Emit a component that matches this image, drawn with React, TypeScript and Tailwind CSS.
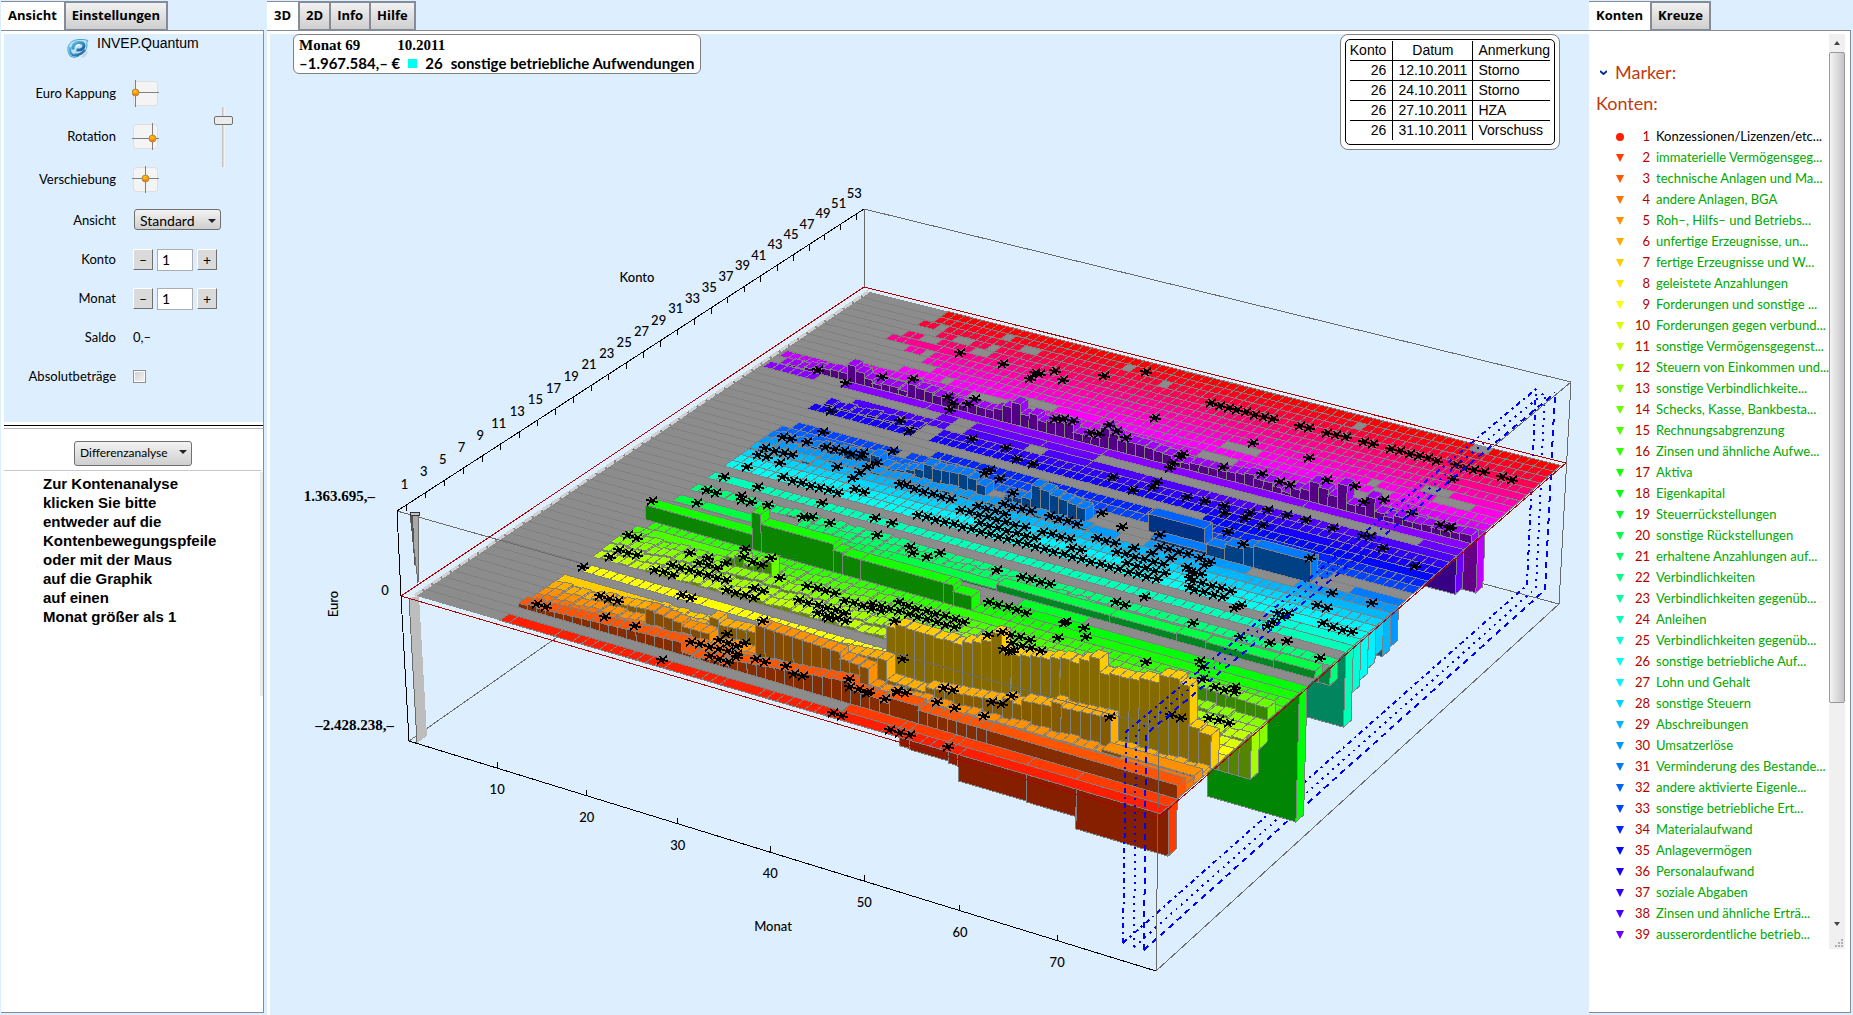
import { useState } from 'react'
import type { ReactNode } from 'react'

type Point = [number, number]

/* ---------- account list ---------- */

const ACCOUNTS = [
  'Konzessionen/Lizenzen/etc...',
  'immaterielle Vermögensgeg...',
  'technische Anlagen und Ma...',
  'andere Anlagen, BGA',
  'Roh–, Hilfs– und Betriebs...',
  'unfertige Erzeugnisse, un...',
  'fertige Erzeugnisse und W...',
  'geleistete Anzahlungen',
  'Forderungen und sonstige ...',
  'Forderungen gegen verbund...',
  'sonstige Vermögensgegenst...',
  'Steuern von Einkommen und...',
  'sonstige Verbindlichkeite...',
  'Schecks, Kasse, Bankbesta...',
  'Rechnungsabgrenzung',
  'Zinsen und ähnliche Aufwe...',
  'Aktiva',
  'Eigenkapital',
  'Steuerrückstellungen',
  'sonstige Rückstellungen',
  'erhaltene Anzahlungen auf...',
  'Verbindlichkeiten',
  'Verbindlichkeiten gegenüb...',
  'Anleihen',
  'Verbindlichkeiten gegenüb...',
  'sonstige betriebliche Auf...',
  'Lohn und Gehalt',
  'sonstige Steuern',
  'Abschreibungen',
  'Umsatzerlöse',
  'Verminderung des Bestande...',
  'andere aktivierte Eigenle...',
  'sonstige betriebliche Ert...',
  'Materialaufwand',
  'Anlagevermögen',
  'Personalaufwand',
  'soziale Abgaben',
  'Zinsen und ähnliche Erträ...',
  'ausserordentliche betrieb...',
]

const NOTES = [
  { konto: 26, datum: '12.10.2011', text: 'Storno' },
  { konto: 26, datum: '24.10.2011', text: 'Storno' },
  { konto: 26, datum: '27.10.2011', text: 'HZA' },
  { konto: 26, datum: '31.10.2011', text: 'Vorschuss' },
]

const accountColor = (k: number, light = 50) => `hsl(${Math.round((k * 360) / 53)} 100% ${light}%)`

/* ---------- projection ---------- */

const MONTHS = 80
const KONTEN = 54

// maps the unit square onto the quad left, front, right, back
function quadMap(p0: Point, p1: Point, p2: Point, p3: Point) {
  const dx1 = p1[0] - p2[0]
  const dx2 = p3[0] - p2[0]
  const sx = p0[0] - p1[0] + p2[0] - p3[0]
  const dy1 = p1[1] - p2[1]
  const dy2 = p3[1] - p2[1]
  const sy = p0[1] - p1[1] + p2[1] - p3[1]
  const den = dx1 * dy2 - dx2 * dy1
  const g = (sx * dy2 - dx2 * sy) / den
  const h = (dx1 * sy - sx * dy1) / den
  const a = p1[0] - p0[0] + g * p1[0]
  const b = p3[0] - p0[0] + h * p3[0]
  const d = p1[1] - p0[1] + g * p1[1]
  const e = p3[1] - p0[1] + h * p3[1]
  return (u: number, v: number): Point => {
    const w = 1 + g * u + h * v
    return [(a * u + b * v + p0[0]) / w, (d * u + e * v + p0[1]) / w]
  }
}

const zeroPlane = quadMap([401, 596], [1158, 818], [1566, 463], [864, 287])
const topPlane = quadMap([397, 511], [1159, 728], [1571, 382], [864, 209])
const bottomPlane = quadMap([409, 741], [1156, 971], [1559, 604], [868, 419])

function project(m: number, k: number, h = 0): Point {
  const u = m / MONTHS
  const v = k / KONTEN
  const p = zeroPlane(u, v)
  if (h === 0) return p
  const q = h > 0 ? topPlane(u, v) : bottomPlane(u, v)
  const t = h > 0 ? h / 85 : -h / 150
  return [p[0] + (q[0] - p[0]) * t, p[1] + (q[1] - p[1]) * t]
}

const pts = (list: Point[]) => list.map(([x, y]) => `${x.toFixed(1)},${y.toFixed(1)}`).join(' ')

/* ---------- balances ---------- */

// from month, to month, height at start, height at end, drawn as one block
type Seg = [number, number, number?, number?, boolean?]

const flat = (...ranges: [number, number][]): Seg[] => ranges.map(([a, b]) => [a, b, 0, 0])
const block = (a: number, b: number, h = 0): Seg => [a, b, h, h, true]
const bars = (from: number, heights: number[]): Seg[] => heights.map((h, i) => [from + i, from + i, h, h])

const ROWS: Record<number, Seg[]> = {
  1: [[11, 11], block(12, 16), block(17, 18), [19, 28], block(29, 31), [32, 34], block(35, 38), [39, 46], block(47, 51), [52, 58], [59, 59], block(60, 79)],
  2: [block(47, 52, -4), block(53, 53, -18), block(54, 57, -19), block(58, 58, -21), block(59, 65, -36), block(66, 70, -37), block(71, 79, -49)],
  3: [[11, 28, 4, 12], [29, 33, 2, 3], [34, 46, 9, 21], [47, 49, 14, 13], [50, 50, 11, 11], block(51, 53, 17), [54, 60, 13, 13], block(61, 79, 13)],
  4: [[11, 16, 1, 2], [17, 30, 2, 3], [31, 47, 3, 4], [48, 50, 4, 4], block(51, 53, 7), [54, 58, 4, 4], block(59, 62, 5), [63, 72, 5, 5], block(73, 79, 7)],
  5: [[11, 22, 1, 2], [23, 26, 17, 13], [27, 29, 10, 10], [30, 34, 2, 3], [35, 43, 32, 29], [44, 46, 23, 21], [47, 60, 3, 3], [61, 70, 4, 4], block(71, 79, 8)],
  6: [[11, 15, 1, 1], [16, 22, 3, 8], [23, 28, 3, 4], [29, 29, 18, 18], [30, 34, 13, 16], [35, 42, 19, 21], [43, 47, 22, 25], [48, 51, 6, 5], [52, 59, 10, 17], [60, 61, 21, 19], [62, 64, 24, 26], [65, 65, 31, 31], [66, 70, 28, 31], [71, 79, 3, 3]],
  7: [block(11, 20, 1), [21, 46, 1, 2], ...bars(47, [50, 54, 53, 53, 53, 52, 53, 52, 56, 59, 63, 73, 56, 57, 59, 61, 62, 65, 67, 66, 71, 76, 63, 65, 65, 66, 69, 69, 77, 78, 74, 36, 33])],
  8: flat([47, 60], [61, 79]),
  9: [[12, 24], block(25, 27), [28, 46], [47, 79]],
  10: flat([62, 79]),
  11: [[11, 30, 0, 3], [31, 47, 3, 1], [48, 79, 1, 1]],
  12: [[11, 28, 1, 3], [29, 46, 2, 5], [47, 71, 1, 2], [72, 79, -45, -45]],
  13: [[11, 24, 2, 4], [25, 40, 5, 3], [41, 70, 2, 3], [71, 76, 2, 2], [77, 79, -22, -22]],
  14: [[11, 22, 1, 2], [23, 24, 12, 15], [25, 26, 9, 14], [27, 27, 19, 19], [28, 50, 1, 1], [51, 72, 1, 2], [73, 79, 14, 12]],
  15: [[11, 12], block(13, 23, 1), [24, 40, 1, 1], [41, 79]],
  16: [[12, 44], block(45, 50), [51, 79]],
  17: [block(11, 22, 15), block(23, 23, 38), block(24, 31, 28), block(32, 32, 22), block(33, 34, 20), block(35, 43, 20), block(44, 44, 20), block(45, 46, 14), [47, 54], block(55, 79)],
  18: [[47, 51], block(52, 55), block(56, 70), block(71, 79, -130)],
  19: [block(50, 56)],
  20: [block(11, 13, 1), block(14, 23, 1), [24, 34, 1, 1], block(35, 46, 2), block(47, 58, 7), block(59, 65, 7), block(66, 68, 8), block(69, 75, 7), block(76, 79, 8)],
  21: [[24, 46, 1, 1], [47, 55, 1, 1]],
  22: [[11, 34, 0, 1], [35, 70], [71, 79, -20, -20]],
  24: [[11, 12], block(13, 15), [16, 72], block(73, 79, -76)],
  25: [block(71, 73), block(74, 79, -48)],
  26: [[11, 30], [31, 70], block(71, 79, -42)],
  27: [[11, 74], [75, 79, -37, -37]],
  28: [[11, 22], block(23, 25), [26, 58], block(59, 62), [63, 75], [76, 79, -30, -30]],
  29: [[11, 18, 1, 1], block(19, 21), [22, 60], block(61, 65), [66, 71], block(72, 79, -38)],
  30: [[11, 30, 1, 1], [31, 47, 1, 1], block(48, 50), [54, 60], block(61, 64), [70, 79, -35, -35]],
  31: [[11, 15, 1, 2], [16, 22, 3, 8], [23, 23, 11, 11], [24, 26, 2, 3], [27, 28, 6, 9], [29, 29, 16, 16], [30, 33, 14, 16], [34, 34, 14, 14], [35, 35, 10, 10], [38, 40, 5, 9], [41, 42, 24, 22], [43, 46, 19, 14], block(54, 59, 3), block(60, 61, 11), block(62, 63, 16), block(64, 64, 20), block(65, 70, 22), block(75, 79)],
  32: [[11, 14], block(15, 19), [20, 46], block(53, 58, 18), [59, 71]],
  33: flat([12, 23], [25, 60], [61, 79]),
  34: [[27, 60], block(61, 70), [71, 79]],
  35: [[56, 72], block(73, 79)],
  36: [[11, 22], [25, 62], block(63, 68), [69, 79]],
  37: [[12, 14, 1, 1], [15, 22, 1, 1], [25, 79]],
  38: [block(14, 18), [19, 24], block(27, 33), block(36, 40), block(41, 46), block(47, 52), [53, 68], block(69, 79)],
  39: [block(23, 24), block(27, 34), block(35, 40), block(76, 79, -40)],
  40: [[2, 7], block(11, 20), block(21, 40), block(41, 62), block(63, 79)],
  41: [
    [3, 4, 1, 1],
    ...bars(5, [2, 3, 5, 7, 8, 8, 18, 13, 8, 4, 7, 7, 4, 14, 12, 11, 9, 9, 6, 6, 9, 9, 9, 12, 17, 23, 13, 16, 11, 13, 15, 16, 8, 8, 9, 21, 17, 12, 13, 13, 12, 11, 10, 5, 6, 8, 8, 8, 8, 9, 10, 12, 9, 9, 6, 4, 9, 11, 21, 17, 12, 26, 8, 9, 20, 7, 5, 8, 6, 6, 7, 6, 6, 7, 8]),
  ],
  42: [[2, 8], block(9, 10), [11, 72], block(73, 79, -58)],
  43: flat([10, 22], [31, 48], [53, 64], [68, 79]),
  44: [[14, 18], [20, 27], block(32, 36), [37, 66], [69, 79]],
  45: [[17, 49], [54, 65], [67, 72], block(77, 79)],
  46: [[15, 17], [18, 70], block(74, 79)],
  47: flat([12, 13], [15, 79]),
  48: [[9, 10], block(11, 14), block(15, 18), [19, 70], block(71, 79)],
  49: flat([10, 11], [14, 17], [20, 79]),
  50: [[13, 14], [17, 18], [20, 68], block(69, 79)],
  51: flat([10, 11], [13, 21], [24, 37], [39, 79]),
  52: flat([11, 18], [20, 32], [34, 58], [60, 79]),
  53: flat([11, 70], [73, 79]),
}

/* ---------- booking crosses ---------- */

// konto, from month, to month, step
const CROSS_RUNS: [number, number, number, number?][] = [
  [50, 44, 51], [50, 54, 55], [50, 57, 59], [50, 61, 62], [50, 64, 69], [50, 71, 74], [50, 76, 77],
  [41, 34, 36], [41, 38, 40], [41, 41, 42], [41, 76, 77], [31, 17, 21], [31, 12, 13],
  [29, 29, 33], [28, 35, 42], [29, 36, 39], [30, 38, 41], [27, 38, 44], [28, 44, 47], [30, 43, 46], [29, 49, 51],
  [28, 52, 57], [27, 54, 58], [26, 18, 23], [26, 32, 58], [27, 24, 25], [27, 48, 49], [28, 60, 61], [26, 62, 65],
  [27, 61, 65], [29, 53, 58, 2], [30, 55, 58],
  [22, 12, 13], [22, 16, 17], [28, 12, 13], [29, 13, 15],
  [14, 11, 12], [14, 18, 22, 2], [14, 24, 28], [12, 12, 14], [12, 18, 24], [11, 12, 12], [11, 17, 19],
  [11, 25, 28], [12, 27, 28], [13, 20, 22], [12, 32, 37], [13, 36, 40], [14, 31, 34], [14, 38, 47], [15, 40, 47], [11, 35, 38],
  [15, 51, 54], [14, 53, 56], [18, 47, 51], [22, 47, 50], [22, 57, 58], [13, 53, 54], [11, 72, 73],
  [12, 75, 77], [14, 74, 76], [6, 16, 18], [3, 12, 13], [4, 28, 33], [3, 31, 34], [4, 35, 36], [5, 30, 32],
  [3, 40, 41], [1, 46, 47], [1, 52, 54], [1, 58, 58], [4, 45, 47], [5, 49, 50], [6, 53, 54], [6, 58, 60], [6, 70, 70],
  [9, 11, 11], [9, 22, 23], [9, 46, 46],
]

// single crosses as canvas positions
const CROSSES: Point[] = [
  [960, 353], [1003, 364], [1035, 373], [1030, 379], [1040, 374], [1055, 371], [1063, 380], [1104, 376], [1146, 372],
  [1155, 418], [818, 370], [846, 383], [882, 377], [913, 379], [948, 397], [953, 403], [950, 410], [975, 399], [968, 404],
  [831, 411], [900, 421], [909, 431], [823, 432], [893, 451], [972, 439], [1006, 448], [1017, 459], [1033, 464],
  [990, 470], [985, 473], [1000, 479], [1113, 477], [1157, 482], [1153, 487], [1133, 490], [1187, 497], [807, 442],
  [837, 467], [765, 448], [747, 467], [780, 463], [783, 477], [853, 478], [860, 473], [868, 467], [877, 463], [863, 453],
  [900, 484], [906, 485], [1013, 493], [1102, 513], [1122, 527], [822, 503], [875, 518], [892, 523], [877, 535],
  [910, 547], [913, 553], [927, 557], [940, 553], [997, 570], [758, 487], [768, 505], [803, 517], [812, 517], [830, 523],
  [1253, 443], [1309, 458], [1453, 479], [1180, 457], [1173, 463], [1170, 468], [1183, 454], [1223, 467], [1262, 474],
  [1280, 482], [1290, 485], [1327, 480], [1355, 486], [1364, 502], [1384, 500], [1412, 513], [1451, 527],
  [1205, 501], [1224, 506], [1268, 510], [1287, 515], [1306, 520], [1250, 513], [1245, 518], [1225, 513], [1263, 525],
  [1228, 532], [1333, 528], [1363, 535], [1370, 537], [1383, 548], [1415, 566], [1243, 544], [1310, 558], [1332, 593],
  [1372, 603], [1317, 605], [1327, 608], [1323, 623], [1333, 627], [1343, 630], [1352, 632], [1193, 623], [1270, 643],
  [1287, 641], [1240, 637], [1278, 613], [1283, 617], [1273, 622], [1268, 626], [1288, 614], [1241, 605], [1235, 608],
  [1195, 573], [1190, 578], [1205, 565], [1200, 558], [1210, 562], [1187, 567], [1190, 587], [1160, 535],
  [652, 501], [697, 503], [741, 496], [724, 477], [745, 549], [1066, 622], [1084, 628], [1086, 637], [1064, 623],
  [1058, 638], [1200, 661], [1203, 667], [1203, 679], [1235, 687], [1146, 662], [1320, 658], [1145, 597],
  [829, 618], [662, 660], [786, 666], [763, 621], [1010, 651], [988, 635], [895, 621], [605, 617], [635, 626],
  [1110, 717], [984, 716], [937, 702], [955, 708], [745, 643], [727, 634], [849, 679], [867, 693],
  [885, 699], [898, 692],
]

const cell = (m: number): [number, number] => [m - 0.4, m === 79 ? 79.8 : m + 0.6]

function Bar({ k, from, to, h }: { k: number; from: number; to: number; h: number }) {
  const a = cell(from)[0]
  const b = cell(to)[1]
  const near = k - 0.5
  const far = k + 0.5
  const top = Math.max(h, 0)
  return (
    <g stroke="#808080">
      {h > 0 && (
        <>
          <polygon points={pts([project(a, near), project(b, near), project(b, near, h), project(a, near, h)])} fill={accountColor(k, 26)} />
          <polygon points={pts([project(b, near), project(b, far), project(b, far, h), project(b, near, h)])} fill={accountColor(k)} />
        </>
      )}
      <polygon points={pts([project(a, near, top), project(b, near, top), project(b, far, top), project(a, far, top)])} fill={accountColor(k)} />
    </g>
  )
}

function HangingBar({ k, from, to, h }: { k: number; from: number; to: number; h: number }) {
  const a = cell(from)[0]
  const b = cell(to)[1]
  return (
    <g stroke="#808080">
      <polygon points={pts([project(a, k - 0.5), project(b, k - 0.5), project(b, k - 0.5, h), project(a, k - 0.5, h)])} fill={accountColor(k, 26)} />
      <polygon points={pts([project(b, k - 0.5), project(b, k + 0.5), project(b, k + 0.5, h), project(b, k - 0.5, h)])} fill={accountColor(k)} />
    </g>
  )
}

function buildSurface() {
  const below: ReactNode[] = []
  const above: ReactNode[] = []
  for (let k = 53; k >= 1; k--) {
    for (const [from, to, h0 = 0, h1 = h0, solid] of ROWS[k] ?? []) {
      const step = solid ? to - from + 1 : 1
      for (let m = from; m <= to; m += step) {
        const t = to > from ? (m - from) / (to - from) : 0
        const end = m + step - 1
        let h = h0 + (h1 - h0) * t
        // small ripple on the low rows
        if (!solid && h > 0 && h < 5) h += ((m * 7 + k * 5) % 5) * 0.6 - 1
        if (h < 0 && h0 < 0) below.push(<HangingBar key={`b${k}-${m}`} k={k} from={m} to={end} h={h} />)
        above.push(<Bar key={`t${k}-${m}`} k={k} from={m} to={end} h={Math.max(h, 0)} />)
      }
    }
  }
  return { below, above }
}

function crossPath() {
  const all: Point[] = [...CROSSES]
  for (const [k, from, to, step = 1] of CROSS_RUNS) {
    for (let m = from; m <= to; m += step) {
      const seg = ROWS[k]?.find((s) => m >= s[0] && m <= s[1])
      all.push(project(m + 0.1, k, Math.max(seg?.[2] ?? 0, 0)))
    }
  }
  return all
    .map(([x, y]) => {
      const px = Math.round(x)
      const py = Math.round(y)
      return `M${px - 5} ${py + 4}l10-8M${px - 2} ${py - 4}l4 8M${px - 6} ${py - 1}l12 2`
    })
    .join('')
}

const surface = buildSurface()
const crosses = crossPath()

function Chart() {
  const kontoTicks = Array.from({ length: 27 }, (_, i) => i * 2 + 1)
  const monthTicks = [10, 20, 30, 40, 50, 60, 70]
  return (
    <svg
      viewBox="270 34 1319 981"
      className="block w-full"
      shapeRendering="crispEdges"
      fill="none"
      role="img"
      aria-label="Konto, Monat, Euro"
    >
      {/* cage behind the surface */}
      <g stroke="#6b6b6b">
        <path d="M864 209L1571 382L1559 604L868 419" />
        <path d="M864 209V287" />
        <path d="M409 741L868 419M1156 971L1559 604" />
      </g>
      <g stroke="#0000ff" strokeWidth="2">
        <path d="M1123 943L1527 585L1536 389" strokeDasharray="5 4 2 4" />
        <path d="M1134 947L1536 588L1545 392" strokeDasharray="2 5" />
        <path d="M1144 950L1545 590L1555 393" strokeDasharray="6 5" />
      </g>

      {surface.below}
      <polygon points={pts([project(0.9, 0.5), project(79.8, 0.5), project(79.8, 53.5), project(0.9, 53.5)])} fill="#8c8c8c" />
      <g stroke="#808080">
        {Array.from({ length: 52 }, (_, i) => (
          <polyline key={i} points={pts([project(0.9, i + 1.5), project(79.8, i + 1.5)])} />
        ))}
      </g>
      <polyline points={pts([project(1, 0.5), project(1, 53.5)])} stroke="#d0d0d0" strokeWidth="3" strokeDasharray="9 2" />
      <path d="M397 511L580 563" stroke="#6b6b6b" />
      {surface.above}

      {/* cone and post at month 1 */}
      <path d="M410 514L418 583L419 514Z" fill="#a8a8a8" stroke="#6b6b6b" />
      <path d="M410 514L415 570L413 514Z" fill="#555" />
      <ellipse cx="415" cy="514" rx="5" ry="2" fill="#c4c4c4" stroke="#333" />
      <path d="M409 598L419 596L427 736L417 743Z" fill="#bdbdbd" />
      <path d="M409 598L417 743" stroke="#6b6b6b" />

      <path d={crosses} stroke="#000" strokeWidth="2" />

      <path d="M1158 818L401 596L864 287L1566 463Z" stroke="#b00000" />
      <path d="M887 651L1159 728L1156 971M1493 447L1571 382" stroke="#6b6b6b" />

      <g stroke="#0000ff" strokeWidth="2">
        <path d="M1123 943L1126 732L1536 389" strokeDasharray="5 4 2 4" />
        <path d="M1134 947L1136 733L1545 392" strokeDasharray="2 5" />
        <path d="M1144 950L1146 734L1555 393" strokeDasharray="6 5" />
      </g>

      {/* axes */}
      <path d="M864 209L397 511L401 596L409 741L1156 971" stroke="#000" />
      <g stroke="#000">
        {kontoTicks.map((k) => {
          const [x, y] = topPlane(0, k / KONTEN)
          return <path key={k} d={`M${x} ${y}v6`} />
        })}
        {monthTicks.map((m) => {
          const [x, y] = bottomPlane(m / MONTHS, 0)
          return <path key={m} d={`M${x} ${y}v-6`} />
        })}
      </g>
      <g fill="#000" textAnchor="middle" className="font-['Lato',sans-serif] text-[13px] font-medium">
        {kontoTicks.map((k) => {
          const [x, y] = topPlane(0, k / KONTEN)
          return (
            <text key={k} x={x - 2} y={y - 16}>
              {k}
            </text>
          )
        })}
        {monthTicks.map((m) => {
          const [x, y] = bottomPlane(m / MONTHS, 0)
          return (
            <text key={m} x={x} y={y + 26}>
              {m}
            </text>
          )
        })}
        <text x="637" y="282">Konto</text>
        <text x="773" y="931">Monat</text>
        <text x="385" y="595">0</text>
        <text transform="translate(338 604) rotate(-90)">Euro</text>
      </g>
      <g fill="#000" textAnchor="end" className="font-['Liberation_Serif',serif] text-[15px] font-bold">
        <text x="375" y="501">1.363.695,–</text>
        <text x="394" y="730">–2.428.238,–</text>
      </g>
    </svg>
  )
}

/* ---------- side panels ---------- */

function Tabs({ items }: { items: string[] }) {
  return (
    <div role="tablist" className="relative z-10 flex h-[30px] pt-px font-['Open_Sans',sans-serif] text-[13px] font-bold">
      {items.map((item, i) => (
        <button
          key={item}
          role="tab"
          aria-selected={i === 0}
          className={
            i === 0
              ? 'h-[29px] border-t border-[#868b98] bg-white px-[7px] whitespace-nowrap'
              : 'h-[29px] border-2 border-b border-[#868b98] bg-gradient-to-b from-[#f2f2f2] to-[#cfcfcf] px-[6px] whitespace-nowrap not-last:border-r-0'
          }
        >
          {item}
        </button>
      ))}
    </div>
  )
}

function Pad({ x, y, label }: { x: number; y: number; label: string }) {
  return (
    <button aria-label={label} className="block">
      <svg width="27" height="27" viewBox="0 0 27 27" fill="none">
        <rect x="1.5" y="1.5" width="24" height="24" rx="3" fill="#f4f4f4" stroke="#dedede" />
        <path d={`M0 ${y}.5H27M${x}.5 0V27`} stroke="#808080" />
        <circle cx={x + 0.5} cy={y + 0.5} r="3.5" fill="#ff9a00" stroke="#8a7a5a" strokeWidth="0.7" />
        <circle cx={x} cy={y - 0.5} r="1.6" fill="#ffc60a" />
        <path d={`M${x - 2} ${y + 2}q2 2 4 0`} stroke="#f26a1b" />
      </svg>
    </button>
  )
}

function Stepper({ id }: { id: string }) {
  const [value, setValue] = useState(1)
  const button = 'h-[21px] w-[20px] border border-t-white border-l-white border-r-[#707070] border-b-[#707070] bg-[#dadada] text-[14px] leading-[17px]'
  return (
    <div className="flex items-center gap-1">
      <button className={button} aria-label={`${id} minus`} onClick={() => setValue(Math.max(1, value - 1))}>
        –
      </button>
      <input
        id={id}
        value={value}
        onChange={(e) => setValue(Number(e.target.value) || 1)}
        className="h-[22px] w-[36px] border border-[#abadb3] bg-white px-1 text-[14px]"
      />
      <button className={button} aria-label={`${id} plus`} onClick={() => setValue(value + 1)}>
        +
      </button>
    </div>
  )
}

function Dropdown({ id, value, className }: { id: string; value: string; className: string }) {
  return (
    <span className="relative inline-block">
      <select
        id={id}
        aria-label={value}
        className={`appearance-none rounded-[3px] border border-[#707070] bg-gradient-to-b from-[#f3f3f3] to-[#cfcfcf] pl-[5px] ${className}`}
      >
        <option>{value}</option>
      </select>
      <svg width="8" height="4" viewBox="0 0 8 4" className="pointer-events-none absolute top-1/2 right-[5px] -mt-[2px]">
        <path d="M0 0H8L4 4Z" fill="#222" />
      </svg>
    </span>
  )
}

function Logo() {
  return (
    <svg width="22" height="22" viewBox="0 0 22 22" fill="none">
      <defs>
        <linearGradient id="swirl" x1="0" y1="0" x2="1" y2="1">
          <stop offset="0" stopColor="#5cc0e6" />
          <stop offset="1" stopColor="#14569a" />
        </linearGradient>
      </defs>
      <path d="M14 20q6-1 7-7l-5 3z" fill="#c9d3dc" />
      <path d="M1 9Q3 2 12 1.500Q17 1 21 2.500Q19 4 20 7Q20 15 12 16Q9 16 8 15Q8 19 12 18Q7 21 3 18Q0 14 1 9Z" fill="#b9e2f2" stroke="#4aa5ce" />
      <path d="M6 11.500Q5 6 11 4.500Q17 4 17 8Q16 12.500 9.500 12" stroke="url(#swirl)" strokeWidth="3" />
      <path d="M3 9Q2 17 8 17.500Q14 17 18 12" stroke="url(#swirl)" strokeWidth="2.2" />
      <path d="M9 9Q10 6.500 13 7" stroke="#fff" strokeWidth="1.2" />
    </svg>
  )
}

function SettingsPanel() {
  return (
    <section className="flex w-[263px] shrink-0 flex-col">
      <Tabs items={['Ansicht', 'Einstellungen']} />
      <div className="mb-[2px] flex flex-1 flex-col border border-l-0 border-[#868b98] bg-white pt-[3px] pl-[3px]">
        <div className="h-[388px] bg-[#ddeeff] font-['Lato',sans-serif] text-[13px]">
          <div className="flex h-[38px] items-start gap-2 pl-[63px]">
            <span className="pt-1">
              <Logo />
            </span>
            <span className="font-['Liberation_Sans',sans-serif] text-[14px] leading-[18px]">INVEP.Quantum</span>
          </div>
          <div className="grid grid-cols-[112px_auto_1fr] grid-rows-[repeat(3,43px)_repeat(5,39px)] items-center">
            <span className="text-right">Euro Kappung</span>
            <span className="pl-4">
              <Pad x={3} y={12} label="Euro Kappung" />
            </span>
            <input
              type="range"
              aria-label="Zoom"
              defaultValue={82}
              className="col-start-3 row-span-3 row-start-1 ml-[55px] h-[60px] w-[19px] appearance-none bg-transparent bg-[linear-gradient(90deg,#b8b8b8,#fff)] bg-[size:3px_100%] bg-center bg-no-repeat [direction:rtl] [writing-mode:vertical-lr] [&::-webkit-slider-thumb]:h-[9px] [&::-webkit-slider-thumb]:w-[19px] [&::-webkit-slider-thumb]:appearance-none [&::-webkit-slider-thumb]:rounded-[2px] [&::-webkit-slider-thumb]:border [&::-webkit-slider-thumb]:border-[#707070] [&::-webkit-slider-thumb]:bg-[#ebebeb]"
            />
            <span className="col-start-1 text-right">Rotation</span>
            <span className="pl-4">
              <Pad x={20} y={15} label="Rotation" />
            </span>
            <span className="col-start-1 text-right">Verschiebung</span>
            <span className="pl-4">
              <Pad x={13} y={12} label="Verschiebung" />
            </span>
            <label htmlFor="ansicht" className="text-right">
              Ansicht
            </label>
            <div className="col-span-2 pl-[18px]">
              <Dropdown id="ansicht" value="Standard" className="h-[21px] w-[87px] text-[14px]" />
            </div>
            <label htmlFor="konto" className="text-right">
              Konto
            </label>
            <div className="col-span-2 pl-[17px]">
              <Stepper id="konto" />
            </div>
            <label htmlFor="monat" className="text-right">
              Monat
            </label>
            <div className="col-span-2 pl-[17px]">
              <Stepper id="monat" />
            </div>
            <span className="text-right">Saldo</span>
            <span className="col-span-2 pl-[17px]">0,–</span>
            <label htmlFor="absolut" className="text-right">
              Absolutbeträge
            </label>
            <div className="col-span-2 flex pl-[17px]">
              <input
                id="absolut"
                type="checkbox"
                className="size-[13px] appearance-none border border-[#8e8f8f] bg-gradient-to-br from-[#cfcfd4] to-[#f6f6f6] ring-1 ring-white ring-inset"
              />
            </div>
          </div>
        </div>
        <hr className="mt-[3px] border-black" />
        <hr className="mt-[2px] border-[#b4b4b4]" />
        <div className="mr-px flex border-b border-[#c8c8c8] pt-[10px] pb-[4px] pl-[70px] font-['Lato',sans-serif]">
          <Dropdown id="analyse" value="Differenzanalyse" className="h-[25px] w-[118px] text-[12px]" />
        </div>
        <div className="flex h-[225px] justify-between pt-px">
          <p className="pt-[2px] pl-[39px] font-['Liberation_Sans',sans-serif] text-[15px] leading-[19px] font-bold">
            Zur Kontenanalyse
            <br />
            klicken Sie bitte
            <br />
            entweder auf die
            <br />
            Kontenbewegungspfeile
            <br />
            oder mit der Maus
            <br />
            auf die Graphik
            <br />
            auf einen
            <br />
            Monat größer als 1
          </p>
          <div className="w-[3px] bg-[#ececec]" />
        </div>
      </div>
    </section>
  )
}

function AccountsPanel() {
  return (
    <section className="flex w-[264px] shrink-0 flex-col">
      <Tabs items={['Konten', 'Kreuze']} />
      <div className="mr-[2px] mb-[2px] flex flex-1 items-start border-t border-r border-b border-[#868b98] bg-white">
        <div className="flex w-full pt-[3px]">
          <div className="min-w-0 flex-1 pb-1 font-['Lato',sans-serif]">
            <h2 className="flex items-center gap-2 pt-[27px] pl-[11px] text-[18px] leading-[22px] text-[#c03a0e]">
              <svg width="7" height="5" viewBox="0 0 7 5" fill="none">
                <path d="M0 1L3.5 4L7 1" stroke="#003399" strokeWidth="2" />
              </svg>
              Marker:
            </h2>
            <h2 className="pt-[9px] pl-[7px] text-[18px] leading-[22px] text-[#c03a0e]">Konten:</h2>
            <ul className="mt-[12px] text-[13px]">
              {ACCOUNTS.map((name, i) => (
                <li key={i} className="flex h-[21px] items-center pl-[27px] leading-[21px] whitespace-nowrap">
                  <svg width="8" height="8" viewBox="0 0 8 8" fill={accountColor(i + 1)} className="shrink-0">
                    {i === 0 ? <circle cx="4" cy="4" r="4" /> : <path d="M0 0H8L4 8Z" />}
                  </svg>
                  <span className="w-[26px] shrink-0 text-right text-[#b00000]">{i + 1}</span>
                  <a href="#" className={i === 0 ? 'pl-[6px] text-black' : 'pl-[6px] text-[#00a800]'}>
                    {name}
                  </a>
                </li>
              ))}
            </ul>
          </div>
          {/* scrollbar */}
          <div className="mr-[5px] flex w-[16px] shrink-0 flex-col bg-[#f0f0f0]">
            <div className="flex h-[18px] items-center justify-center">
              <svg width="6" height="4" viewBox="0 0 6 4">
                <path d="M0 4H6L3 0Z" fill="#444" />
              </svg>
            </div>
            <div className="h-[651px] rounded-[2px] border border-[#9a9a9a] bg-gradient-to-r from-[#f4f4f4] to-[#c4c4c8]" />
            <div className="flex-1" />
            <div className="flex h-[16px] items-center justify-center">
              <svg width="6" height="4" viewBox="0 0 6 4">
                <path d="M0 0H6L3 4Z" fill="#444" />
              </svg>
            </div>
            <div className="flex h-[17px] items-end justify-end p-[2px]">
              <svg width="8" height="8" viewBox="0 0 8 8" fill="#b0b0b0">
                <path d="M6 0h2v2H6zM3 3h2v2H3zM6 3h2v2H6zM0 6h2v2H0zM3 6h2v2H3zM6 6h2v2H6z" />
              </svg>
            </div>
          </div>
        </div>
      </div>
    </section>
  )
}

function ChartPanel() {
  return (
    <section className="ml-[3px] flex min-w-0 flex-1 flex-col">
      <Tabs items={['3D', '2D', 'Info', 'Hilfe']} />
      <div className="relative flex-1 border-t border-[#868b98] pt-[3px] before:absolute before:inset-x-0 before:top-0 before:h-[3px] before:bg-white">
        <div className="border-l-[3px] border-white">
          <Chart />
        </div>
        <div className="absolute top-[3px] left-[26px] rounded-[6px] border border-[#808080] bg-white px-[5px] py-px font-bold">
          <div className="flex gap-[37px] font-['Liberation_Serif',serif] text-[15px] leading-[19px]">
            <span>Monat 69</span>
            <span>10.2011</span>
          </div>
          <div className="flex items-center font-['Lato',sans-serif] text-[15px] leading-[17px] whitespace-nowrap">
            –1.967.584,– €
            <span className="mx-2 size-[9px] bg-[#00fff0]" />
            26
            <span className="pl-2">sonstige betriebliche Aufwendungen</span>
          </div>
        </div>
        <div className="absolute top-[3px] right-[29px] rounded-[8px] border border-[#808080] bg-white p-1">
          <div className="rounded-[5px] border border-black px-1 pt-px pb-1">
            <table className="border-collapse font-['Liberation_Sans',sans-serif] text-[14px] leading-[19px]">
              <thead>
                <tr className="border-b border-black">
                  <th className="pr-[6px] text-left font-normal">Konto</th>
                  <th className="border-x border-black px-[5px] font-normal">Datum</th>
                  <th className="pl-[5px] text-left font-normal">Anmerkung</th>
                </tr>
              </thead>
              <tbody>
                {NOTES.map((note) => (
                  <tr key={note.datum} className="border-b border-black last:border-b-0">
                    <td className="pr-[6px] text-right">{note.konto}</td>
                    <td className="border-x border-black px-[5px]">{note.datum}</td>
                    <td className="pl-[5px]">{note.text}</td>
                  </tr>
                ))}
              </tbody>
            </table>
          </div>
        </div>
      </div>
    </section>
  )
}

export default function App() {
  return (
    <main className="flex min-h-screen bg-[#ddeeff] pl-px text-black">
      <SettingsPanel />
      <ChartPanel />
      <AccountsPanel />
    </main>
  )
}
